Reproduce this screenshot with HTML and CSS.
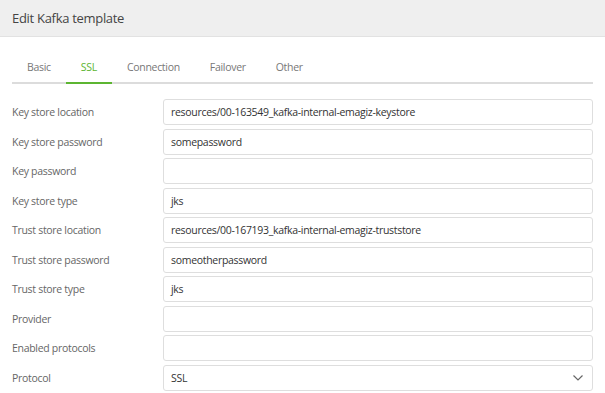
FILE: index.html
```html
<!DOCTYPE html>
<html>
<head>
  <title>Edit Kafka template</title>
  <link rel="stylesheet" href="styles.css">
</head>
<body>

  <div class="header">Edit Kafka template</div>

  <div class="tabs">
    <div class="tab">Basic</div>
    <div class="tab active">SSL</div>
    <div class="tab">Connection</div>
    <div class="tab">Failover</div>
    <div class="tab">Other</div>
  </div>

  <div class="form">
    <label>Key store location</label>
    <div class="field">resources/00-163549_kafka-internal-emagiz-keystore</div>

    <label>Key store password</label>
    <div class="field">somepassword</div>

    <label>Key password</label>
    <div class="field"></div>

    <label>Key store type</label>
    <div class="field">jks</div>

    <label>Trust store location</label>
    <div class="field">resources/00-167193_kafka-internal-emagiz-truststore</div>

    <label>Trust store password</label>
    <div class="field">someotherpassword</div>

    <label>Trust store type</label>
    <div class="field">jks</div>

    <label>Provider</label>
    <div class="field"></div>

    <label>Enabled protocols</label>
    <div class="field"></div>

    <label>Protocol</label>
    <div class="field select">
      SSL
      <svg class="chevron" width="10" height="6" viewBox="0 0 10 6">
        <path d="M0.5 0.5 L5 5 L9.5 0.5" fill="none" stroke="#666" stroke-width="1.2"/>
      </svg>
    </div>
  </div>

</body>
</html>
```

FILE: styles.css
```css
body {
  margin: 0;
  background: #fff;
  font-family: "Open Sans", "Noto Sans", sans-serif;
  font-size: 10.5px;
  letter-spacing: -0.3px;
  color: #333;
}

.header {
  height: 36px;
  line-height: 36px;
  padding-left: 12px;
  background: #efefef;
  border-bottom: 1px solid #e2e2e2;
  font-size: 13px;
  color: #444;
}

.tabs {
  display: flex;
  margin: 16px 12px 0 12px;
  border-bottom: 2px solid #dcdcdc;
}

.tab {
  padding: 7px 15px 8px;
  line-height: 14px;
  margin-bottom: -2px;
  border-bottom: 2px solid transparent;
  color: #777;
}

.tab.active {
  color: #5cb531;
  border-bottom-color: #5cb531;
}

.form {
  display: grid;
  grid-template-columns: 151px 430px;
  grid-auto-rows: 26px;
  row-gap: 3.5px;
  margin: 15px 0 0 12px;
}

.form label {
  align-self: center;
  color: #666;
}

.field {
  box-sizing: border-box;
  height: 26px;
  line-height: 24px;
  padding: 0 7px;
  border: 1px solid #dedede;
  border-radius: 3px;
  color: #333;
}

.select {
  display: flex;
  justify-content: space-between;
  align-items: center;
}

.chevron {
  margin-right: 2px;
}
```
